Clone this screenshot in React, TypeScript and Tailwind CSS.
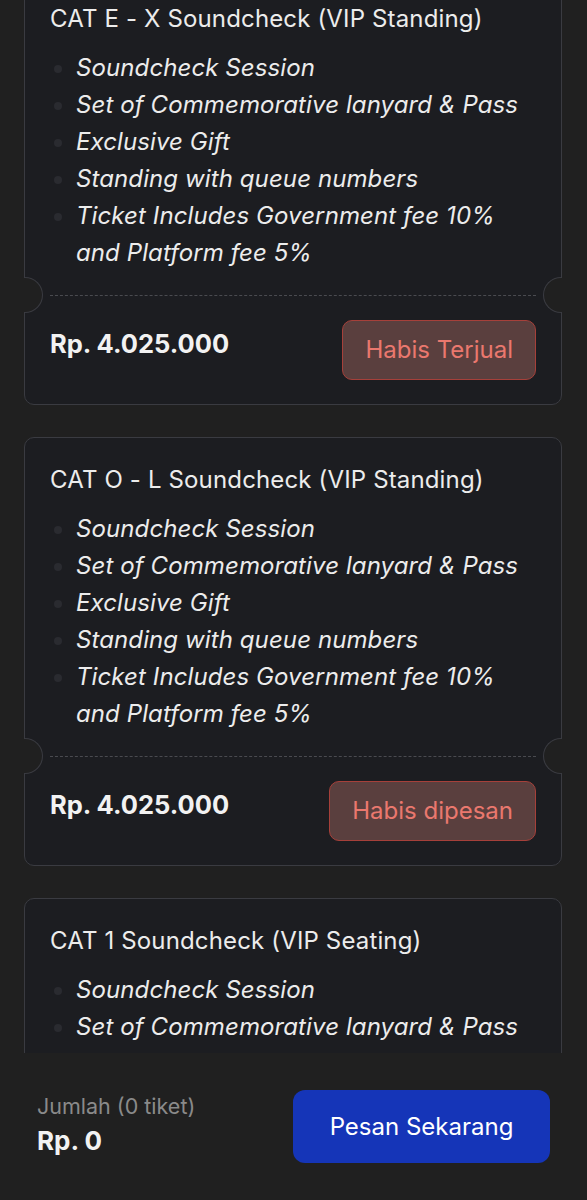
import React from 'react';

interface Ticket {
  title: string;
  perks: string[];
  price: string;
  status?: string;
}

const perks = [
  'Soundcheck Session',
  'Set of Commemorative lanyard & Pass',
  'Exclusive Gift',
  'Standing with queue numbers',
  'Ticket Includes Government fee 10% and Platform fee 5%',
];

const tickets: Ticket[] = [
  { title: 'CAT E - X Soundcheck (VIP Standing)', perks, price: 'Rp. 4.025.000', status: 'Habis Terjual' },
  { title: 'CAT O - L Soundcheck (VIP Standing)', perks, price: 'Rp. 4.025.000', status: 'Habis dipesan' },
  { title: 'CAT 1 Soundcheck (VIP Seating)', perks, price: 'Rp. 4.025.000', status: 'Habis Terjual' },
];

function TicketCard({ ticket }: { ticket: Ticket }) {
  return (
    <div className="relative rounded-[10px] border border-[#3a3b41] bg-[#1c1d21]">
      <div className="px-[25px] pt-[26px]">
        <h2 className="text-[24px] leading-[32px] tracking-[0.15px] text-[#ececec]">{ticket.title}</h2>
        <ul className="mt-[14px] list-disc pl-[26px] pr-[4px] text-[24px] leading-[37px] tracking-[0.1px] italic text-[#ececec] marker:text-[#2a2b30]">
          {ticket.perks.map((p) => (
            <li key={p}>{p}</li>
          ))}
        </ul>
      </div>
      <div className="relative mt-[24px] h-px">
        <div className="mx-[25px] border-t border-dashed border-[#4a4b50]" />
        <span className="absolute left-[-1px] top-[-18px] h-[36px] w-[19px] rounded-r-full border border-l-0 border-[#3a3b41] bg-[#202020]" />
        <span className="absolute right-[-1px] top-[-18px] h-[36px] w-[19px] rounded-l-full border border-r-0 border-[#3a3b41] bg-[#202020]" />
      </div>
      <div className="flex items-start justify-between px-[25px] pt-[24px] pb-[24px]">
        <p className="mt-[8px] text-[25.5px] leading-[32px] font-bold text-[#f2f2f2]">{ticket.price}</p>
        <button
          type="button"
          className="h-[60px] rounded-[10px] border border-[#a6403a] bg-[#5a3f3e] px-[22px] text-[24px] text-[#ea786e]"
        >
          {ticket.status}
        </button>
      </div>
    </div>
  );
}

export default function App() {
  return (
    <div
      className="flex h-[1200px] w-full flex-col overflow-hidden bg-[#202020]"
      style={{ fontFamily: 'Inter, "Noto Sans", sans-serif' }}
    >
      <div className="h-[1053px] shrink-0 overflow-hidden">
        <div className="mt-[-24px] flex flex-col gap-[32px] pl-[24px] pr-[25px]">
          {tickets.map((t) => (
            <TicketCard key={t.title} ticket={t} />
          ))}
        </div>
      </div>
      <div className="flex flex-1 items-center justify-between pl-[37px] pr-[37px]">
        <div className="mt-[-4px] flex flex-col">
          <span className="text-[21.5px] leading-[28px] text-[#8a8a8a]">Jumlah (0 tiket)</span>
          <span className="mt-[5px] text-[26px] leading-[32px] font-bold text-[#f2f2f2]">Rp. 0</span>
        </div>
        <button
          type="button"
          className="h-[73px] w-[257px] rounded-[12px] bg-[#1535b8] text-[24px] text-white"
        >
          Pesan Sekarang
        </button>
      </div>
    </div>
  );
}
